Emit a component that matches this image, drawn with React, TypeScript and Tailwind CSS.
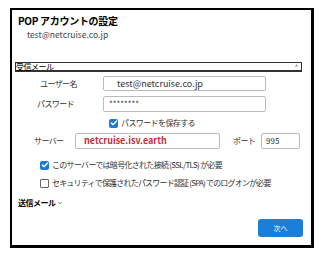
import { Check, ChevronDown } from "lucide-react";

const Box = ({ checked }: { checked: boolean }) =>
  checked ? (
    <span className="w-[9px] h-[9px] rounded-[2px] bg-[#1f7ad4] flex items-center justify-center shrink-0">
      <Check className="w-[8px] h-[8px] text-white" strokeWidth={4} />
    </span>
  ) : (
    <span className="w-[9px] h-[9px] rounded-[1px] border border-[#666] bg-white shrink-0" />
  );

const App = () => {
  return (
    <div className="w-[319px] h-[265px] bg-white pt-[8px] pl-[10px] font-['Noto_Sans_CJK_JP',sans-serif] text-[#333]">
      <div className="w-[304px] h-[240px] border-l-2 border-t-2 border-r-[3px] border-b-[3px] border-black bg-white flex flex-col">
        {/* Header */}
        <div className="pl-[6px] pt-[4px] text-[10px] leading-[14px] font-bold text-black tracking-[-0.3px]">
          POP アカウントの設定
        </div>
        <div className="pl-[15px] text-[8.5px] leading-[12px] text-[#444]">test@netcruise.co.jp</div>

        {/* Incoming section */}
        <div className="mt-[22px] ml-[3px] w-[287px] h-[10px] border border-b-2 border-[#333] flex items-center justify-between">
          <span className="text-[8px] leading-[8px] text-black tracking-[-0.5px]">受信メール</span>
          <span className="text-[6px] leading-[6px] pr-[3px] text-[#555]">^</span>
        </div>

        <div className="flex items-center h-[15px] mt-[4px]">
          <span className="w-[91px] pl-[28px] text-[8px] tracking-[-0.6px]">ユーザー名</span>
          <div className="w-[163px] h-[15px] border border-[#bbb] rounded-[2px] pl-[13px] flex items-center text-[9px] text-[#333]">
            test@netcruise.co.jp
          </div>
        </div>

        <div className="flex items-center h-[16px] mt-[5px]">
          <span className="w-[91px] pl-[25px] text-[8px] tracking-[-0.6px]">パスワード</span>
          <div className="w-[163px] h-[16px] border border-[#bbb] rounded-[2px] pl-[5px] flex items-center text-[8px] text-[#333]">
            ********
          </div>
        </div>

        <div className="flex items-center gap-[3px] mt-[6px] pl-[97px] h-[10px]">
          <Box checked />
          <span className="text-[8px] tracking-[-0.6px]">パスワードを保存する</span>
        </div>

        <div className="flex items-center h-[16px] mt-[5px]">
          <span className="w-[63px] pl-[22px] text-[8px] tracking-[-0.6px]">サーバー</span>
          <div className="w-[145px] h-[16px] border border-[#bbb] rounded-[2px] pl-[8px] flex items-center text-[9px] font-bold text-[#c4303a]">
            netcruise.isv.earth
          </div>
          <span className="ml-[13px] w-[28px] text-[8px] tracking-[-0.6px]">ポート</span>
          <div className="w-[39px] h-[16px] border border-[#bbb] rounded-[2px] pl-[4px] flex items-center text-[8px] text-[#333]">
            995
          </div>
        </div>

        <div className="flex items-center gap-[3px] mt-[11px] pl-[28px] h-[10px]">
          <Box checked />
          <span className="text-[8px] tracking-[-0.7px]">このサーバーでは暗号化された接続 (SSL/TLS) が必要</span>
        </div>

        <div className="flex items-center gap-[3px] mt-[8px] pl-[28px] h-[10px]">
          <Box checked={false} />
          <span className="text-[8px] tracking-[-0.8px]">セキュリティで保護されたパスワード認証 (SPA) でのログオンが必要</span>
        </div>

        <div className="mt-[10px] pl-[6px] flex items-center text-[8px] leading-[10px] font-bold text-black tracking-[-0.5px]">
          送信メール
          <ChevronDown className="w-[6px] h-[6px] text-[#555] ml-[1px]" strokeWidth={3} />
        </div>

        <div className="flex justify-end pr-[8px] mt-[11px]">
          <button className="w-[45px] h-[18px] rounded-[3px] bg-[#1a7fd6] text-white text-[7px] leading-[18px]">
            次へ
          </button>
        </div>
      </div>
    </div>
  );
};

export default App;
